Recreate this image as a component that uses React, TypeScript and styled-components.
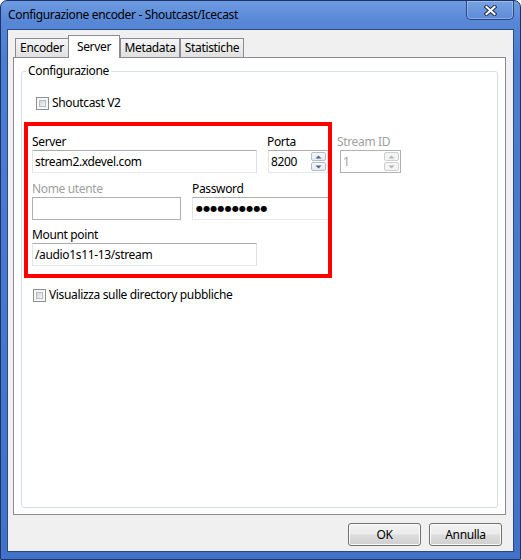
import React from "react";
import styled, { createGlobalStyle } from "styled-components";

const Global = createGlobalStyle`
  html, body { margin: 0; padding: 0; background: #fff; }
  body {
    font-family: "Noto Sans", "Open Sans", sans-serif;
    font-size: 12px;
    letter-spacing: -0.35px;
    color: #000;
  }
  #root { width: 521px; height: 560px; }
  * { box-sizing: border-box; }
`;

const Window = styled.div`
  width: 521px;
  height: 560px;
  display: flex;
  flex-direction: column;
  border: 1px solid #1d3468;
  border-radius: 7px 7px 0 0;
  overflow: hidden;
  padding: 0 6px 7px 6px;
  background: linear-gradient(180deg, #6e9be0 0px, #5887d7 20px, #4c7dd0 60px, #4272c8 100%);
`;

const TitleBar = styled.div`
  height: 28px;
  margin: 0 -6px;
  display: flex;
  align-items: flex-start;
`;

const Title = styled.div`
  margin: 6px 0 0 7px;
  line-height: 16px;
  white-space: nowrap;
`;

const CloseButton = styled.div`
  margin-left: auto;
  margin-right: 6px;
  width: 48px;
  height: 19px;
  display: flex;
  align-items: center;
  justify-content: center;
  border: 1px solid #2a4680;
  border-top: none;
  border-radius: 0 0 5px 5px;
  box-shadow: inset 0 0 0 1px rgba(255, 255, 255, 0.28);
  background: linear-gradient(180deg, #78a2e2 0%, #5d8bd8 100%);
`;

const Client = styled.div`
  flex: 1;
  display: flex;
  flex-direction: column;
  background: #f0f0f0;
  border: 1px solid #2a4a88;
  padding-top: 5px;
`;

const TabStrip = styled.div`
  height: 22px;
  margin-left: 5px;
  padding-left: 2px;
  display: flex;
  align-items: flex-start;
`;

const Tab = styled.div<{ $w: number; $active?: boolean }>`
  position: relative;
  z-index: ${(p) => (p.$active ? 2 : 1)};
  width: ${(p) => p.$w}px;
  height: ${(p) => (p.$active ? 23 : 19)}px;
  margin-top: ${(p) => (p.$active ? 0 : 3)}px;
  margin-left: ${(p) => (p.$active ? -1 : 0)}px;
  border: 1px solid #898c95;
  border-bottom: none;
  display: flex;
  justify-content: center;
  align-items: ${(p) => (p.$active ? "flex-start" : "center")};
  padding-top: ${(p) => (p.$active ? 3 : 0)}px;
  line-height: 16px;
  white-space: nowrap;
  background: ${(p) =>
    p.$active ? "#fff" : "linear-gradient(180deg, #f5f5f5 0%, #ebebeb 50%, #e0e0e0 100%)"};
`;

const Pane = styled.div`
  height: 458px;
  margin: 0 7px 0 5px;
  border: 1px solid #898c95;
  background: #fff;
  display: flex;
  flex-direction: column;
`;

const GroupBox = styled.div`
  flex: 1;
  margin: 13px 7px 6px 7px;
  border: 1px solid #d5dfe5;
  border-radius: 3px;
  display: flex;
  flex-direction: column;
  align-items: flex-start;
`;

const GroupTitle = styled.div`
  margin: -9px 0 0 4px;
  padding: 0 2px;
  background: #fff;
  line-height: 16px;
`;

const CheckRow = styled.label<{ $left: number; $top: number }>`
  display: flex;
  align-items: flex-start;
  gap: 3px;
  height: 16px;
  line-height: 16px;
  margin-left: ${(p) => p.$left}px;
  margin-top: ${(p) => p.$top}px;
  white-space: nowrap;
`;

const CheckBox = styled.span`
  position: relative;
  display: block;
  width: 13px;
  height: 13px;
  margin-top: 2px;
  border: 1px solid #8e8f8f;
  background: #f6f6f6;
  &::after {
    content: "";
    position: absolute;
    inset: 2px;
    border: 1px solid #b8bcc1;
    background: linear-gradient(135deg, #d2d5d9 0%, #e6e8ea 60%, #f7f7f7 100%);
  }
`;

const FieldRow = styled.div`
  display: flex;
  align-items: flex-start;
  margin: 11px 0 0 2px;
`;

const RedBox = styled.div`
  width: 308px;
  height: 156px;
  border: 4px solid #ff0000;
  overflow: hidden;
  padding: 8px 0 0 4px;
  display: flex;
  flex-direction: column;
`;

const Row = styled.div<{ $top?: number }>`
  display: flex;
  align-items: flex-start;
  margin-top: ${(p) => p.$top ?? 0}px;
`;

const Field = styled.div<{ $w: number; $left?: number; $top?: number }>`
  width: ${(p) => p.$w}px;
  flex: none;
  margin-left: ${(p) => p.$left ?? 0}px;
  padding-top: ${(p) => p.$top ?? 0}px;
  display: flex;
  flex-direction: column;
`;

const Label = styled.div<{ $disabled?: boolean }>`
  line-height: 16px;
  white-space: nowrap;
  color: ${(p) => (p.$disabled ? "#a0a0a0" : "#000")};
`;

const TextBox = styled.div<{ $disabled?: boolean; $indent?: number; $w?: number }>`
  height: 23px;
  ${(p) => (p.$w ? `width: ${p.$w}px;` : "")}
  margin-left: ${(p) => p.$indent ?? 0}px;
  display: flex;
  align-items: center;
  padding-left: 2px;
  white-space: nowrap;
  overflow: hidden;
  background: #fff;
  border: 1px solid;
  border-color: ${(p) =>
    p.$disabled ? "#adb2b5" : "#abadb3 #dbdfe6 #e3e9ef #e2e3ea"};
  color: ${(p) => (p.$disabled ? "#a0a0a0" : "#000")};
`;

const SpinText = styled.span`
  flex: 1;
  line-height: 16px;
`;

const SpinButtons = styled.div`
  align-self: stretch;
  width: 15px;
  margin: 1px;
  display: flex;
  flex-direction: column;
  gap: 1px;
`;

const SpinButton = styled.div<{ $disabled?: boolean }>`
  flex: 1;
  display: flex;
  align-items: center;
  justify-content: center;
  border: 1px solid ${(p) => (p.$disabled ? "#cfcfcf" : "#b3bcc9")};
  border-radius: 2px;
  background: ${(p) =>
    p.$disabled ? "#f4f4f4" : "linear-gradient(180deg, #f7f8fa 0%, #e6e9ee 100%)"};
`;

const Dots = styled.span`
  font-family: "DejaVu Sans", sans-serif;
  font-size: 8px;
  letter-spacing: 0.2px;
  line-height: 16px;
  margin-left: 1px;
`;

const ButtonBar = styled.div`
  display: flex;
  justify-content: flex-end;
  gap: 8px;
  margin-top: 8px;
  padding-right: 11px;
`;

const Button = styled.div`
  width: 73px;
  height: 23px;
  display: flex;
  align-items: center;
  justify-content: center;
  border: 1px solid #707070;
  border-radius: 3px;
  box-shadow: inset 0 0 0 1px #fbfbfb;
  background: linear-gradient(180deg, #f2f2f2 0%, #ebebeb 48%, #dddddd 52%, #cfcfcf 100%);
  line-height: 16px;
`;

const Arrow = ({ up, disabled }: { up?: boolean; disabled?: boolean }) => (
  <svg width="7" height="4" viewBox="0 0 7 4">
    <path
      d={up ? "M0.5 3.5 L3.5 0.5 L6.5 3.5 Z" : "M0.5 0.5 L3.5 3.5 L6.5 0.5 Z"}
      fill={disabled ? "#b4b4b4" : "#4d6185"}
    />
  </svg>
);

const Spin = ({ value, disabled, w }: { value: string; disabled?: boolean; w: number }) => (
  <TextBox $disabled={disabled} $indent={disabled ? 3 : 1} $w={w}>
    <SpinText>{value}</SpinText>
    <SpinButtons>
      <SpinButton $disabled={disabled}>
        <Arrow up disabled={disabled} />
      </SpinButton>
      <SpinButton $disabled={disabled}>
        <Arrow disabled={disabled} />
      </SpinButton>
    </SpinButtons>
  </TextBox>
);

const CloseX = () => (
  <svg width="13" height="11" viewBox="0 0 13 11">
    <path d="M2.5 2 L10.5 9 M10.5 2 L2.5 9" stroke="#27334d" strokeWidth="4" strokeLinecap="square" />
    <path d="M2.5 2 L10.5 9 M10.5 2 L2.5 9" stroke="#ffffff" strokeWidth="2" strokeLinecap="square" />
  </svg>
);

export default function App() {
  return (
    <>
      <Global />
      <Window>
        <TitleBar>
          <Title>Configurazione encoder - Shoutcast/Icecast</Title>
          <CloseButton>
            <CloseX />
          </CloseButton>
        </TitleBar>
        <Client>
          <TabStrip>
            <Tab $w={54}>Encoder</Tab>
            <Tab $w={52} $active>
              Server
            </Tab>
            <Tab $w={60}>Metadata</Tab>
            <Tab $w={64}>Statistiche</Tab>
          </TabStrip>
          <Pane>
            <GroupBox>
              <GroupTitle>Configurazione</GroupTitle>
              <CheckRow $left={14} $top={16}>
                <CheckBox />
                Shoutcast V2
              </CheckRow>
              <FieldRow>
                <RedBox>
                  <Row>
                    <Field $w={225}>
                      <Label>Server</Label>
                      <TextBox>stream2.xdevel.com</TextBox>
                    </Field>
                    <Field $w={70} $left={10}>
                      <Label>Porta</Label>
                      <Spin value="8200" w={60} />
                    </Field>
                  </Row>
                  <Row $top={8}>
                    <Field $w={149}>
                      <Label $disabled>Nome utente</Label>
                      <TextBox $disabled />
                    </Field>
                    <Field $w={150} $left={11}>
                      <Label>Password</Label>
                      <TextBox>
                        <Dots>●●●●●●●●●●</Dots>
                      </TextBox>
                    </Field>
                  </Row>
                  <Row $top={7}>
                    <Field $w={225}>
                      <Label>Mount point</Label>
                      <TextBox>/audio1s11-13/stream</TextBox>
                    </Field>
                  </Row>
                </RedBox>
                <Field $w={70} $left={5} $top={12}>
                  <Label $disabled>Stream ID</Label>
                  <Spin value="1" disabled w={61} />
                </Field>
              </FieldRow>
              <CheckRow $left={11} $top={9}>
                <CheckBox />
                Visualizza sulle directory pubbliche
              </CheckRow>
            </GroupBox>
          </Pane>
          <ButtonBar>
            <Button>OK</Button>
            <Button>Annulla</Button>
          </ButtonBar>
        </Client>
      </Window>
    </>
  );
}
